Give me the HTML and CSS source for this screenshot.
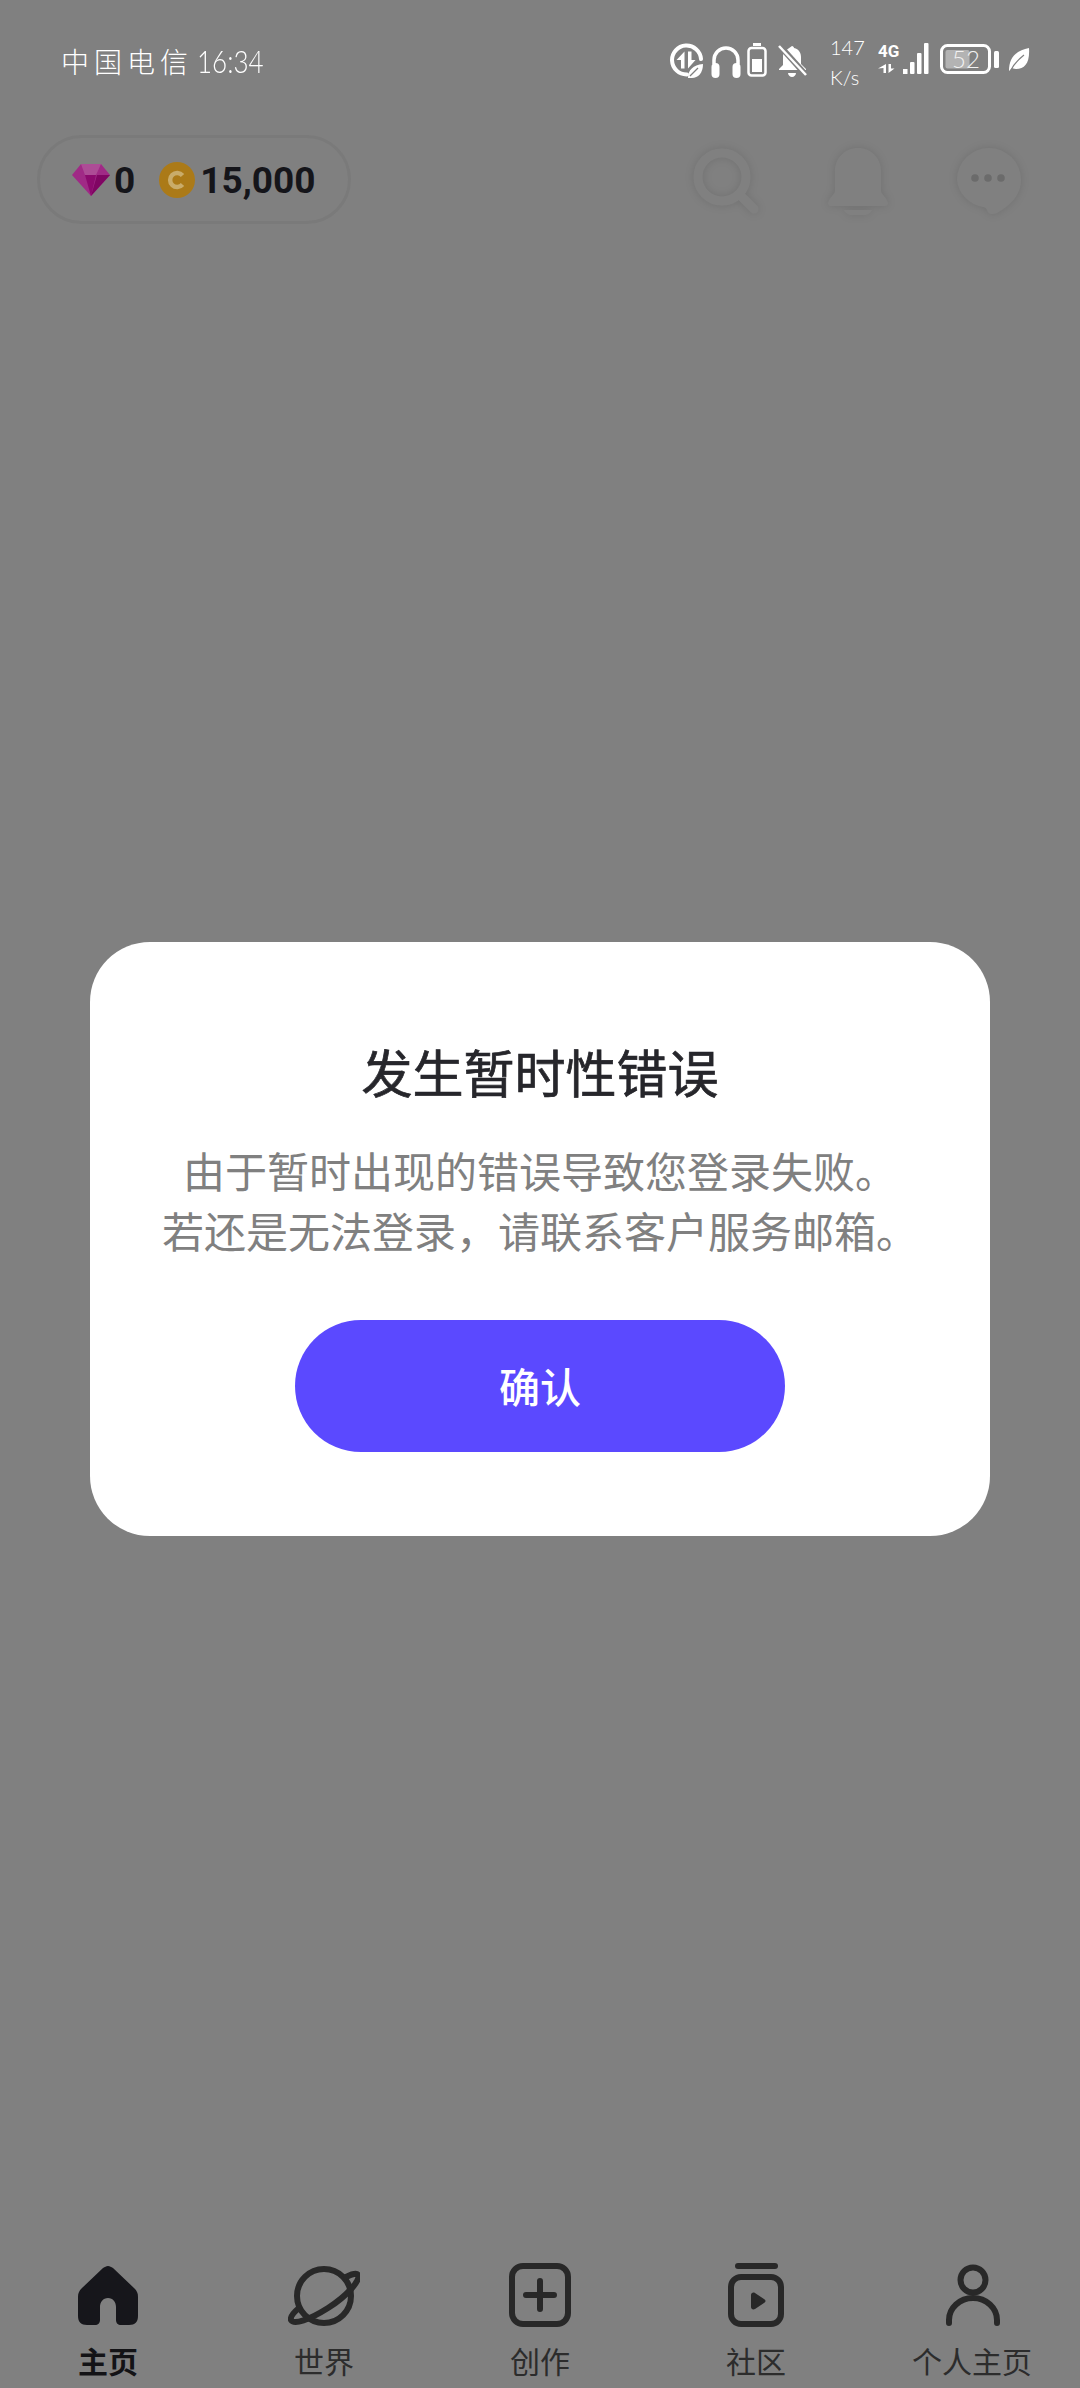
FILE: index.html
```html
<!DOCTYPE html>
<html lang="zh-CN">

<head>
    <meta charset="UTF-8">
    <meta name="viewport" content="width=device-width, initial-scale=1.0">
    <title>发生暂时性错误</title>
    <link rel="stylesheet" href="styles.css">
</head>

<body>
    <div class="status-bar">
        <div class="status-left">
            <span class="carrier">中</span><span class="carrier">国</span><span class="carrier">电</span><span class="carrier">信</span><span class="clock">16:34</span>
        </div>
        <div class="status-right">
            <svg class="ico-data" width="36" height="36" viewBox="0 0 36 36">
                <path d="M20 31.500A14.500 14.500 0 1 1 34 16" fill="none" stroke="#fff" stroke-width="4" stroke-linecap="round"/>
                <path d="M17.500 8.500v17h-3.500V17H9.500zM21 8.500v17l7.500-8.500H24.500V8.500z" fill="#fff"/>
                <path d="M21 35c0-8 5-13 15-14 0 9-5 14-11 14z" fill="#fff"/>
                <path d="M23 33l8-8" stroke="#808080" stroke-width="1.200"/>
            </svg>
            <svg class="ico-phones" width="30" height="33" viewBox="0 0 30 33">
                <path d="M3 19V15a12 12 0 0 1 24 0v4" fill="none" stroke="#fff" stroke-width="3.500"/>
                <rect x="0.500" y="18" width="8" height="15" rx="4" fill="#fff"/>
                <rect x="21.500" y="18" width="8" height="15" rx="4" fill="#fff"/>
            </svg>
            <svg class="ico-bat-small" width="20" height="34" viewBox="0 0 20 34">
                <rect x="6" y="0" width="8" height="3" fill="#fff"/>
                <rect x="1.500" y="5" width="17" height="27.500" rx="3" fill="none" stroke="#fff" stroke-width="2.500"/>
                <rect x="5" y="16" width="10" height="13" fill="#fff"/>
            </svg>
            <svg class="ico-mute" width="29" height="33" viewBox="0 0 29 33">
                <path d="M14 2c1 0 2 1 2 2 5 1 7 5 7 9v7l5 5v1H1v-1l4-4v-9c0-2 1-4 2-5z" fill="#fff"/>
                <path d="M10 29h8c0 2-2 4-4 4s-4-2-4-4z" fill="#fff"/>
                <path d="M1 1l27 30" stroke="#808080" stroke-width="6"/>
                <path d="M1 2l27 29" stroke="#fff" stroke-width="2.500"/>
            </svg>
            <div class="speed"><span>147</span><span>K/s</span></div>
            <svg class="ico-net" width="52" height="40" viewBox="0 -6 52 40">
                <text x="0" y="14" class="net-label">4G</text>
                <path d="M8 21v9H5.500v-5L0 25.500zM10.500 21v9l6-4.500h-3.500V21z" fill="#fff"/>
                <rect x="25" y="26" width="4.500" height="5" fill="#fff"/>
                <rect x="32" y="19" width="4.500" height="12" rx="1" fill="#fff"/>
                <rect x="39" y="10" width="4.500" height="21" rx="1" fill="#fff"/>
                <rect x="46" y="0" width="4.500" height="31" rx="1" fill="#fff"/>
            </svg>
            <svg class="ico-battery" width="60" height="32" viewBox="0 0 60 32">
                <rect x="1.500" y="1.500" width="48" height="27" rx="6" fill="none" stroke="#fff" stroke-width="3"/>
                <rect x="5.500" y="6" width="24" height="18.500" rx="2" fill="#b3b3b3"/>
                <text x="26" y="24" class="bat-label" text-anchor="middle">52</text>
                <rect x="54" y="7" width="5" height="17" rx="1.500" fill="#fff"/>
            </svg>
            <svg class="ico-leaf" width="22" height="24" viewBox="0 0 22 24">
                <path d="M1 23C1 10 7 3 21 0c1 15-4 21-13 21-2 0-4-1-4-1z" fill="#fff"/>
                <path d="M3 22C6 16 11 11 16 7" stroke="#808080" stroke-width="1.200" fill="none"/>
            </svg>
        </div>
    </div>

    <div class="top-bar">
        <div class="wallet">
            <svg class="gem" width="38" height="32" viewBox="0 0 38 32">
                <path d="M9 0h20l9 11-19 21L0 11z" fill="#a02a86"/>
                <path d="M9 0h20l-5 11H13z" fill="#ad4c96"/>
                <path d="M19 32L13 11h11z" fill="#8c0a6e"/>
                <path d="M19 32l6-21h13z" fill="#800563"/>
            </svg>
            <span class="amount">0</span>
            <svg class="coin" width="36" height="36" viewBox="0 0 36 36">
                <circle cx="18" cy="18" r="18" fill="#ab7a18"/>
                <path d="M23.500 13.500a7 7 0 1 0 0 9" fill="none" stroke="#c9ac6a" stroke-width="4.500"/>
            </svg>
            <span class="amount">15,000</span>
        </div>
        <div class="top-actions">
            <svg class="soft-icon" width="68" height="68" viewBox="0 0 68 68">
                <path d="M50 50l12 12" stroke="#808080" stroke-width="9" stroke-linecap="round"/>
                <circle cx="30" cy="30" r="24" fill="none" stroke="#808080" stroke-width="9"/>
            </svg>
            <svg class="soft-icon" width="64" height="68" viewBox="0 0 64 68">
                <path d="M32 1c13 0 23 10 23 23v20c0 3 6 7 7 12 0 2-1 3-3 3H5c-2 0-3-1-3-3 1-5 7-9 7-12V24C9 11 19 1 32 1z" fill="#808080"/>
                <path d="M18 63h28c-2 4-7 6-14 6s-12-2-14-6z" fill="#808080"/>
            </svg>
            <svg class="soft-icon chat" width="66" height="68" viewBox="0 0 66 68">
                <path d="M33 1a32 32 0 0 1 32 32c0 16-12 26-24 33-5 2-9 1-10-3-1-2-2-3-4-3A31 31 0 0 1 1 33 32 32 0 0 1 33 1z" fill="#808080"/>
                <circle cx="19" cy="31" r="3.800" fill="#6b6b6b"/>
                <circle cx="32" cy="31" r="3.800" fill="#6b6b6b"/>
                <circle cx="45" cy="31" r="3.800" fill="#6b6b6b"/>
            </svg>
        </div>
    </div>

    <main class="overlay">
        <div class="dialog">
            <h2 class="dialog-title">发生暂时性错误</h2>
            <p class="dialog-text">由于暂时出现的错误导致您登录失败。<br>若还是无法登录，请联系客户服务邮箱。</p>
            <button class="dialog-btn" type="button">确认</button>
        </div>
    </main>

    <nav class="tabs">
        <div class="tab active">
            <svg width="72" height="64" viewBox="0 0 72 64">
                <path d="M36 3c2 0 3 1 5 2l21 20c3 3 4 5 4 9v19c0 6-3 9-9 9h-8c-3 0-5-2-5-5V44c0-5-3-9-8-9s-8 4-8 9v13c0 3-2 5-5 5H15c-6 0-9-3-9-9V34c0-4 1-6 4-9L31 5c2-1 3-2 5-2z" fill="#16161b"/>
            </svg>
            <span>主页</span>
        </div>
        <div class="tab">
            <svg width="72" height="64" viewBox="0 0 72 64">
                <circle cx="36" cy="33" r="27" fill="none" stroke="#282828" stroke-width="6"/>
                <path d="M58 14c6-3 11-4 12-2 3 5-11 21-30 33S6 62 3 57c-1-3 2-7 8-12" fill="none" stroke="#282828" stroke-width="6" stroke-linecap="round"/>
            </svg>
            <span>世界</span>
        </div>
        <div class="tab">
            <svg width="72" height="64" viewBox="0 0 72 64">
                <rect x="8" y="3" width="56" height="58" rx="11" fill="none" stroke="#282828" stroke-width="6"/>
                <path d="M36 18v28M22 32h28" stroke="#282828" stroke-width="6" stroke-linecap="round"/>
            </svg>
            <span>创作</span>
        </div>
        <div class="tab">
            <svg width="72" height="64" viewBox="0 0 72 64">
                <path d="M18 3h37" stroke="#282828" stroke-width="6" stroke-linecap="round"/>
                <rect x="11" y="14" width="50" height="47" rx="10" fill="none" stroke="#282828" stroke-width="6"/>
                <path d="M31 32c0-2 2-3 4-2l9 6c2 1 2 3 0 4l-9 6c-2 1-4 0-4-2z" fill="#282828"/>
            </svg>
            <span>社区</span>
        </div>
        <div class="tab">
            <svg width="72" height="64" viewBox="0 0 72 64">
                <circle cx="37" cy="17" r="12.500" fill="none" stroke="#282828" stroke-width="6"/>
                <path d="M13 60V57a24 22 0 0 1 48 0v3" fill="none" stroke="#282828" stroke-width="6" stroke-linecap="round"/>
            </svg>
            <span>个人主页</span>
        </div>
    </nav>
</body>

</html>
```

FILE: styles.css
```css
* {
    box-sizing: border-box;
}

body {
    margin: 0;
    width: 1080px;
    height: 2388px;
    display: flex;
    flex-direction: column;
    background: #808080;
    font-family: "Noto Sans CJK SC", "Noto Sans", sans-serif;
    overflow: hidden;
}

/* status bar */
.status-bar {
    height: 120px;
    padding: 43px 50px 0 61px;
    display: flex;
    justify-content: space-between;
    align-items: flex-start;
    color: #fff;
}

.status-left {
    display: flex;
    align-items: center;
    height: 36px;
    font-weight: 300;
}

.carrier {
    width: 33px;
    font-size: 28px;
    line-height: 36px;
}

.clock {
    margin-left: 4px;
    font-family: "Lato", sans-serif;
    font-weight: 300;
    font-size: 26px;
    line-height: 36px;
    transform: scaleY(1.2);
}

.status-right {
    display: flex;
    align-items: flex-start;
}

.ico-phones {
    margin-left: 8px;
    margin-top: 2px;
}

.ico-bat-small {
    margin-left: 6px;
}

.ico-mute {
    margin-left: 11px;
    margin-top: 1px;
}

.speed {
    margin-left: 23px;
    margin-top: -7px;
    width: 30px;
    display: flex;
    flex-direction: column;
    gap: 8px;
    font-family: "Lato", sans-serif;
    font-weight: 300;
    font-size: 20px;
    line-height: 22px;
    white-space: nowrap;
}

.ico-net {
    margin-left: 18px;
    margin-top: -6px;
}

.net-label {
    font-family: "Roboto", sans-serif;
    font-weight: 700;
    font-size: 17px;
    fill: #fff;
}

.ico-battery {
    margin-left: 10px;
    margin-top: 1px;
}

.bat-label {
    font-family: "Lato", sans-serif;
    font-weight: 300;
    font-size: 24px;
    fill: #f2f2f2;
}

.ico-leaf {
    margin-left: 8px;
    margin-top: 5px;
}

/* top bar */
.top-bar {
    height: 112px;
    padding: 15px 58px 0 37px;
    display: flex;
    justify-content: space-between;
    align-items: flex-start;
}

.wallet {
    width: 314px;
    height: 89px;
    padding-left: 32px;
    display: flex;
    align-items: center;
    border: 3px solid #7a7a7a;
    border-radius: 45px;
}

.gem {
    margin-right: 4px;
}

.coin {
    margin-left: 24px;
    margin-right: 5px;
}

.amount {
    padding-top: 2px;
    font-family: "Roboto", sans-serif;
    font-weight: 700;
    font-size: 37px;
    line-height: 40px;
    color: #15151a;
}

.top-actions {
    display: flex;
    gap: 66px;
    padding-top: 12px;
}

.soft-icon {
    filter: drop-shadow(0 0 4px rgba(0, 0, 0, 0.12));
}

/* dialog */
.overlay {
    flex: 1;
    display: flex;
    align-items: center;
    justify-content: center;
}

.dialog {
    width: 900px;
    height: 594px;
    padding-top: 94px;
    display: flex;
    flex-direction: column;
    align-items: center;
    background: #fff;
    border-radius: 60px;
}

.dialog-title {
    margin: 0;
    font-size: 51px;
    font-weight: 400;
    line-height: 70px;
    color: #26262b;
    -webkit-text-stroke: 0.7px #26262b;
}

.dialog-text {
    margin: 34px 0 0;
    font-size: 42px;
    line-height: 60px;
    text-align: center;
    color: #808080;
}

.dialog-btn {
    width: 490px;
    height: 132px;
    margin-top: 60px;
    padding-bottom: 4px;
    border: none;
    border-radius: 66px;
    background: #5b49ff;
    color: #fff;
    font-family: inherit;
    font-size: 41px;
    font-weight: 500;
}

/* bottom tabs */
.tabs {
    height: 142px;
    padding-top: 17px;
    display: grid;
    grid-template-columns: repeat(5, 1fr);
}

.tab {
    display: flex;
    flex-direction: column;
    align-items: center;
    gap: 15px;
    font-size: 30px;
    line-height: 36px;
    color: #2c2c2c;
}

.tab.active {
    font-weight: 700;
    color: #131316;
}
```
